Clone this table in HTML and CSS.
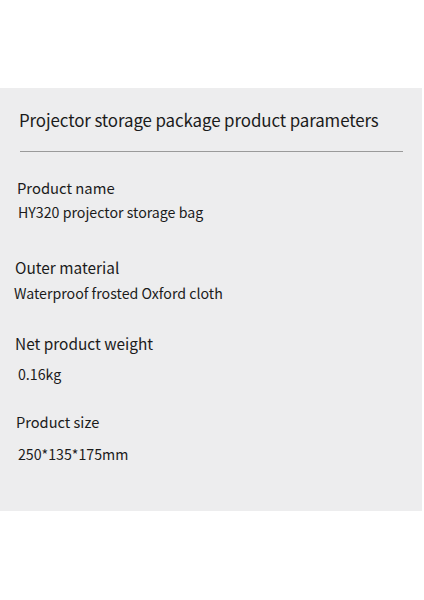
FILE: index.html
```html
<!DOCTYPE html>
<html>
<head>
<meta charset="utf-8">
<link rel="stylesheet" href="styles.css">
</head>
<body>
<div class="top-space"></div>
<section class="panel">
  <h1 class="title">Projector storage package product parameters</h1>
  <hr class="rule">
  <div class="param p1">
    <div class="label">Product name</div>
    <div class="value">HY320 projector storage bag</div>
  </div>
  <div class="param p2">
    <div class="label">Outer material</div>
    <div class="value">Waterproof frosted Oxford cloth</div>
  </div>
  <div class="param p3">
    <div class="label">Net product weight</div>
    <div class="value">0.16kg</div>
  </div>
  <div class="param p4">
    <div class="label">Product size</div>
    <div class="value">250*135*175mm</div>
  </div>
</section>
</body>
</html>
```
FILE: styles.css
```css
html, body {
  margin: 0;
  padding: 0;
  background: #ffffff;
}
body {
  font-family: "Noto Sans CJK SC", "Noto Sans", sans-serif;
  color: #1b1b1b;
  width: 424px;
}
.top-space {
  height: 88px;
}
.panel {
  width: 422px;
  height: 423px;
  background: #ededee;
  box-sizing: border-box;
  padding-top: 20px;
}
.title {
  margin: 0;
  padding-left: 19px;
  font-size: 16.9px;
  font-weight: 400;
  line-height: 24px;
  letter-spacing: -0.1px;
  white-space: nowrap;
}
.rule {
  margin: 19px 0 0 20px;
  width: 383px;
  height: 0;
  border: 0;
  border-top: 1px solid #9a9a9a;
}
.param {
  display: flex;
  flex-direction: column;
}
.label {
  font-size: 15px;
  line-height: 22px;
}
.value {
  font-size: 14.2px;
  line-height: 22px;
}
.p1 { margin-top: 25px; padding-left: 17px; }
.p1 .label { font-size: 14.8px; }
.p1 .value { margin-top: 2px; padding-left: 1px; }
.p2 { margin-top: 33px; padding-left: 15px; }
.p2 .label { font-size: 15.4px; }
.p2 .value { margin-top: 4px; margin-left: -1px; }
.p3 { margin-top: 28px; padding-left: 15px; }
.p3 .label { font-size: 15.4px; }
.p3 .value { margin-top: 9px; padding-left: 3px; }
.p4 { margin-top: 26px; padding-left: 16px; }
.p4 .label { font-size: 14.6px; }
.p4 .value { margin-top: 10px; padding-left: 2px; }
```
